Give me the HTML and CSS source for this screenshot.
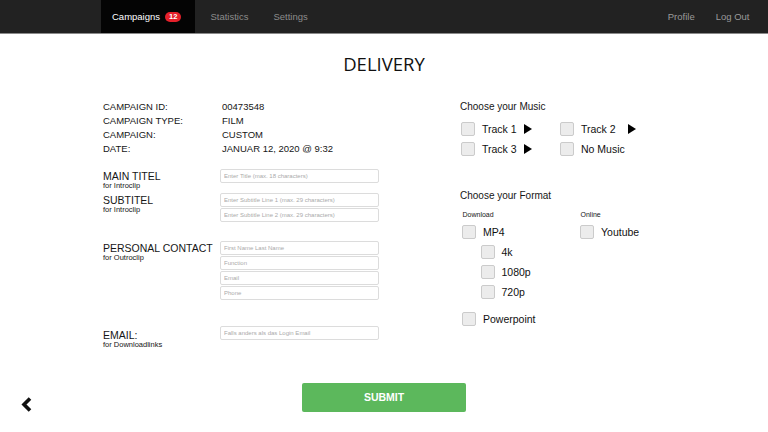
FILE: index.html
```html
<!DOCTYPE html>
<html lang="en">
<head>
  <meta charset="UTF-8">
  <title>Delivery</title>
  <link rel="stylesheet" href="styles.css">
</head>
<body>

  <div class="navbar">
    <div class="nav-left">
      <a href="#" class="nav-link active">Campaigns <span class="badge">12</span></a>
      <a href="#" class="nav-link">Statistics</a>
      <a href="#" class="nav-link">Settings</a>
    </div>
    <div class="nav-right">
      <a href="#" class="nav-link">Profile</a>
      <a href="#" class="nav-link">Log Out</a>
    </div>
  </div>

  <h1 class="page-title">DELIVERY</h1>

  <div class="columns">
    <div class="left-col">
      <div class="info">
        <span>CAMPAIGN ID:</span><span>00473548</span>
        <span>CAMPAIGN TYPE:</span><span>FILM</span>
        <span>CAMPAIGN:</span><span>CUSTOM</span>
        <span>DATE:</span><span>JANUAR 12, 2020 @ 9:32</span>
      </div>

      <div class="section first">
        <div class="section-label">
          <div class="label-main">MAIN TITEL</div>
          <div class="label-sub">for Introclip</div>
        </div>
        <div class="inputs">
          <input type="text" placeholder="Enter Title (max. 18 characters)">
        </div>
      </div>

      <div class="section second">
        <div class="section-label">
          <div class="label-main">SUBTITEL</div>
          <div class="label-sub">for Introclip</div>
        </div>
        <div class="inputs">
          <input type="text" placeholder="Enter Subtitle Line 1 (max. 29 characters)">
          <input type="text" placeholder="Enter Subtitle Line 2 (max. 29 characters)">
        </div>
      </div>

      <div class="section third">
        <div class="section-label">
          <div class="label-main">PERSONAL CONTACT</div>
          <div class="label-sub">for Outroclip</div>
        </div>
        <div class="inputs">
          <input type="text" placeholder="First Name Last Name">
          <input type="text" placeholder="Function">
          <input type="text" placeholder="Email">
          <input type="text" placeholder="Phone">
        </div>
      </div>

      <div class="section fourth">
        <div class="section-label email-label">
          <div class="label-main">EMAIL:</div>
          <div class="label-sub">for Downloadlinks</div>
        </div>
        <div class="inputs">
          <input type="text" placeholder="Falls anders als das Login Email">
        </div>
      </div>
    </div>

    <div class="right-col">
      <div class="group-title">Choose your Music</div>
      <div class="music-grid">
        <label class="check"><span class="box"></span>Track 1<span class="play"></span></label>
        <label class="check"><span class="box"></span>Track 2<span class="play wide"></span></label>
        <label class="check"><span class="box"></span>Track 3<span class="play"></span></label>
        <label class="check"><span class="box"></span>No Music</label>
      </div>

      <div class="group-title format-title">Choose your Format</div>
      <div class="format-grid">
        <div>
          <div class="small-label">Download</div>
          <label class="check"><span class="box"></span>MP4</label>
          <div class="sub-options">
            <label class="check"><span class="box"></span>4k</label>
            <label class="check"><span class="box"></span>1080p</label>
            <label class="check"><span class="box"></span>720p</label>
          </div>
          <label class="check ppt"><span class="box"></span>Powerpoint</label>
        </div>
        <div>
          <div class="small-label">Online</div>
          <label class="check"><span class="box"></span>Youtube</label>
        </div>
      </div>
    </div>
  </div>

  <div class="footer">
    <a href="#" class="back">
      <svg width="11" height="15" viewBox="0 0 11 15">
        <polyline points="9,1.5 3,7.5 9,13.5" fill="none" stroke="#111" stroke-width="3.6" stroke-linejoin="miter"/>
      </svg>
    </a>
    <button class="submit">SUBMIT</button>
    <div></div>
  </div>

</body>
</html>
```

FILE: styles.css
```css
body {
  margin: 0;
  font-family: 'Liberation Sans', Arial, sans-serif;
  color: #161616;
  background: #fff;
}

.navbar {
  height: 33px;
  background: #222;
  border-bottom: 1px solid #8a8a8a;
  display: flex;
  justify-content: space-between;
  padding: 0 8px 0 101px;
}

.nav-left, .nav-right {
  display: flex;
}

.nav-link {
  display: flex;
  align-items: center;
  padding: 0 12.5px;
  color: #8c8c8c;
  font-size: 9.5px;
  text-decoration: none;
}

.nav-right .nav-link {
  padding: 0 10.5px;
  color: #9a9a9a;
}

.nav-link.active {
  background: #040404;
  color: #fff;
  padding: 0 13.5px 0 11px;
  margin-right: 3px;
}

.badge {
  display: inline-block;
  margin-left: 5px;
  background: #e5202a;
  color: #fff;
  font-size: 7.5px;
  font-weight: bold;
  line-height: 10px;
  height: 10px;
  padding: 0 4px;
  border-radius: 5px;
}

.page-title {
  margin: 19px 0 25px;
  text-align: center;
  font-family: 'Open Sans', sans-serif;
  font-weight: 400;
  font-size: 18.5px;
  line-height: 22px;
  color: #111;
}

.columns {
  display: grid;
  grid-template-columns: 357px 1fr;
  padding-left: 103px;
}

.info {
  display: grid;
  grid-template-columns: 119px auto;
  font-size: 9.5px;
  line-height: 14px;
}

.section {
  display: grid;
  grid-template-columns: 117px 159px;
  align-items: start;
}

.section.first { margin-top: 13px; }
.section.second { margin-top: 3px; }
.section.third { margin-top: 19px; }
.section.fourth { margin-top: 26px; }

.section-label {
  padding-top: 1.5px;
}

.email-label {
  padding-top: 4px;
}

.label-main {
  font-size: 10.5px;
  line-height: 11px;
}

.label-sub {
  font-size: 7.5px;
  line-height: 8.5px;
}

.inputs {
  display: flex;
  flex-direction: column;
  gap: 1px;
}

.inputs input {
  box-sizing: border-box;
  width: 159px;
  height: 14px;
  margin: 0;
  padding: 0 3px;
  border: 1px solid #dcdcdc;
  border-radius: 2px;
  font-family: 'Liberation Sans', Arial, sans-serif;
  font-size: 6px;
  color: #333;
  outline: none;
}

.inputs input::placeholder {
  color: #aaa;
}

.group-title {
  font-size: 10px;
  line-height: 14px;
}

.format-title {
  margin-top: 33px;
}

.music-grid {
  display: grid;
  grid-template-columns: 99px auto;
  row-gap: 6px;
  margin-top: 8px;
  padding-left: 1px;
}

.check {
  display: flex;
  align-items: center;
  gap: 7px;
  height: 14px;
  font-size: 10.5px;
  color: #111;
}

.box {
  box-sizing: border-box;
  width: 14px;
  height: 14px;
  background: #ececec;
  border: 1px solid #cbcbcb;
  border-radius: 2px;
}

.play {
  width: 0;
  height: 0;
  margin-left: 0;
  border-left: 8.5px solid #000;
  border-top: 5px solid transparent;
  border-bottom: 5px solid transparent;
}

.play.wide {
  margin-left: 5px;
}

.format-grid {
  display: grid;
  grid-template-columns: 118px auto;
  margin-top: 7px;
  padding-left: 2px;
}

.small-label {
  font-size: 7px;
  line-height: 9px;
  margin-bottom: 6px;
  padding-left: 0.5px;
}

.sub-options {
  display: flex;
  flex-direction: column;
  gap: 6px;
  margin-top: 6px;
  padding-left: 18.5px;
}

.check.ppt {
  margin-top: 13px;
}

.footer {
  display: grid;
  grid-template-columns: 1fr 164px 1fr;
  margin-top: 33px;
}

.back {
  align-self: end;
  padding-left: 21px;
  line-height: 0;
}

.submit {
  height: 29px;
  width: 164px;
  margin: 0;
  background: #5cb85c;
  color: #fff;
  border: none;
  border-radius: 2px;
  font-family: 'Liberation Sans', Arial, sans-serif;
  font-size: 10.5px;
  font-weight: bold;
  cursor: pointer;
}
```
